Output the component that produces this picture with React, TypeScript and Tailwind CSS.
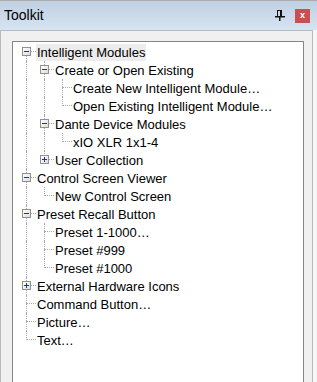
import React from 'react';

interface Node {
  label: string;
  selected?: boolean;
  collapsed?: boolean;
  children?: Node[];
}

interface Row {
  node: Node;
  level: number;
  guides: boolean[];
  isLast: boolean;
  isFirstRoot: boolean;
}

const tree: Node[] = [
  {
    label: 'Intelligent Modules',
    selected: true,
    children: [
      {
        label: 'Create or Open Existing',
        children: [
          { label: 'Create New Intelligent Module…' },
          { label: 'Open Existing Intelligent Module…' },
        ],
      },
      {
        label: 'Dante Device Modules',
        children: [{ label: 'xIO XLR 1x1-4' }],
      },
      { label: 'User Collection', collapsed: true, children: [{ label: 'x' }] },
    ],
  },
  {
    label: 'Control Screen Viewer',
    children: [{ label: 'New Control Screen' }],
  },
  {
    label: 'Preset Recall Button',
    children: [
      { label: 'Preset 1-1000…' },
      { label: 'Preset #999' },
      { label: 'Preset #1000' },
    ],
  },
  { label: 'External Hardware Icons', collapsed: true, children: [{ label: 'x' }] },
  { label: 'Command Button…' },
  { label: 'Picture…' },
  { label: 'Text…' },
];

function flatten(nodes: Node[], level: number, guides: boolean[], rows: Row[]) {
  nodes.forEach((node, i) => {
    const isLast = i === nodes.length - 1;
    rows.push({ node, level, guides, isLast, isFirstRoot: level === 0 && i === 0 });
    if (node.children && !node.collapsed) {
      flatten(node.children, level + 1, [...guides, !isLast], rows);
    }
  });
  return rows;
}

function Expander({ open }: { open: boolean }) {
  return (
    <div className="absolute left-[5px] top-[4px] w-[9px] h-[9px] border border-[#919191] bg-gradient-to-br from-white to-[#dcdcdc] z-10">
      <div className="absolute left-[1px] top-[3px] w-[5px] h-[1px] bg-[#1c3a8a]" />
      {!open && <div className="absolute left-[3px] top-[1px] w-[1px] h-[5px] bg-[#1c3a8a]" />}
    </div>
  );
}

function TreeRow({ row }: { row: Row }) {
  const { node, guides, isLast, isFirstRoot } = row;
  const hasChildren = !!node.children;
  return (
    <div className="flex items-center h-[18px]">
      {guides.map((g, i) => (
        <div key={i} className="relative w-[18px] h-[18px] shrink-0">
          {g && <div className="absolute left-[9px] top-0 h-full border-l border-dotted border-[#a8a8a8]" />}
        </div>
      ))}
      <div className="relative w-[18px] h-[18px] shrink-0">
        <div
          className={
            'absolute left-[9px] border-l border-dotted border-[#a8a8a8] ' +
            (isFirstRoot ? 'top-[9px] bottom-0' : isLast ? 'top-0 h-[9px]' : 'top-0 h-full')
          }
        />
        <div className="absolute left-[9px] top-[8px] w-[10px] border-t border-dotted border-[#a8a8a8]" />
        {hasChildren && <Expander open={!node.collapsed} />}
      </div>
      <span
        className={
          'ml-[1px] px-[1px] leading-[17px] whitespace-nowrap text-black ' +
          (node.selected ? 'bg-[#ececec]' : '')
        }
      >
        {node.label}
      </span>
    </div>
  );
}

function PinIcon() {
  return (
    <svg width="10" height="11" viewBox="0 0 10 11" className="block">
      <rect x="2.5" y="0.5" width="4" height="6" fill="none" stroke="#111" />
      <rect x="5" y="1" width="1.5" height="5.5" fill="#111" />
      <rect x="0" y="6" width="10" height="1.5" fill="#111" />
      <rect x="4" y="7" width="1.5" height="4" fill="#111" />
    </svg>
  );
}

export default function App() {
  const rows = flatten(tree, 0, [], []);
  return (
    <div
      className="w-[317px] h-[382px] overflow-hidden bg-[#f6f6f6] flex flex-col"
      style={{ fontFamily: '"Liberation Sans", Arial, sans-serif' }}
    >
      <div className="h-[30px] shrink-0 border-t border-[#adadad] bg-gradient-to-b from-[#c0d0e2] to-[#d6e4f2] flex items-center pl-[4px] pr-[7px]">
        <span className="text-[14px] text-black leading-none -mt-[1px]">Toolkit</span>
        <div className="ml-auto flex items-center gap-[10px]">
          <PinIcon />
          <div className="w-[15px] h-[14px] bg-[#c75050] flex items-center justify-center">
            <span className="text-white text-[9px] font-bold leading-none -mt-[1px]">x</span>
          </div>
        </div>
      </div>
      <div className="w-[313px] flex-1 border-t border-l border-r border-[#b9b9b9] bg-[#f0f0f0] pt-[10px] pl-[11px] pr-[8px]">
        <div className="h-full border-l border-t border-r border-[#828790] bg-white pt-[1px] pl-[4px] text-[13px]">
          {rows.map((row, i) => (
            <TreeRow key={i} row={row} />
          ))}
        </div>
      </div>
    </div>
  );
}
